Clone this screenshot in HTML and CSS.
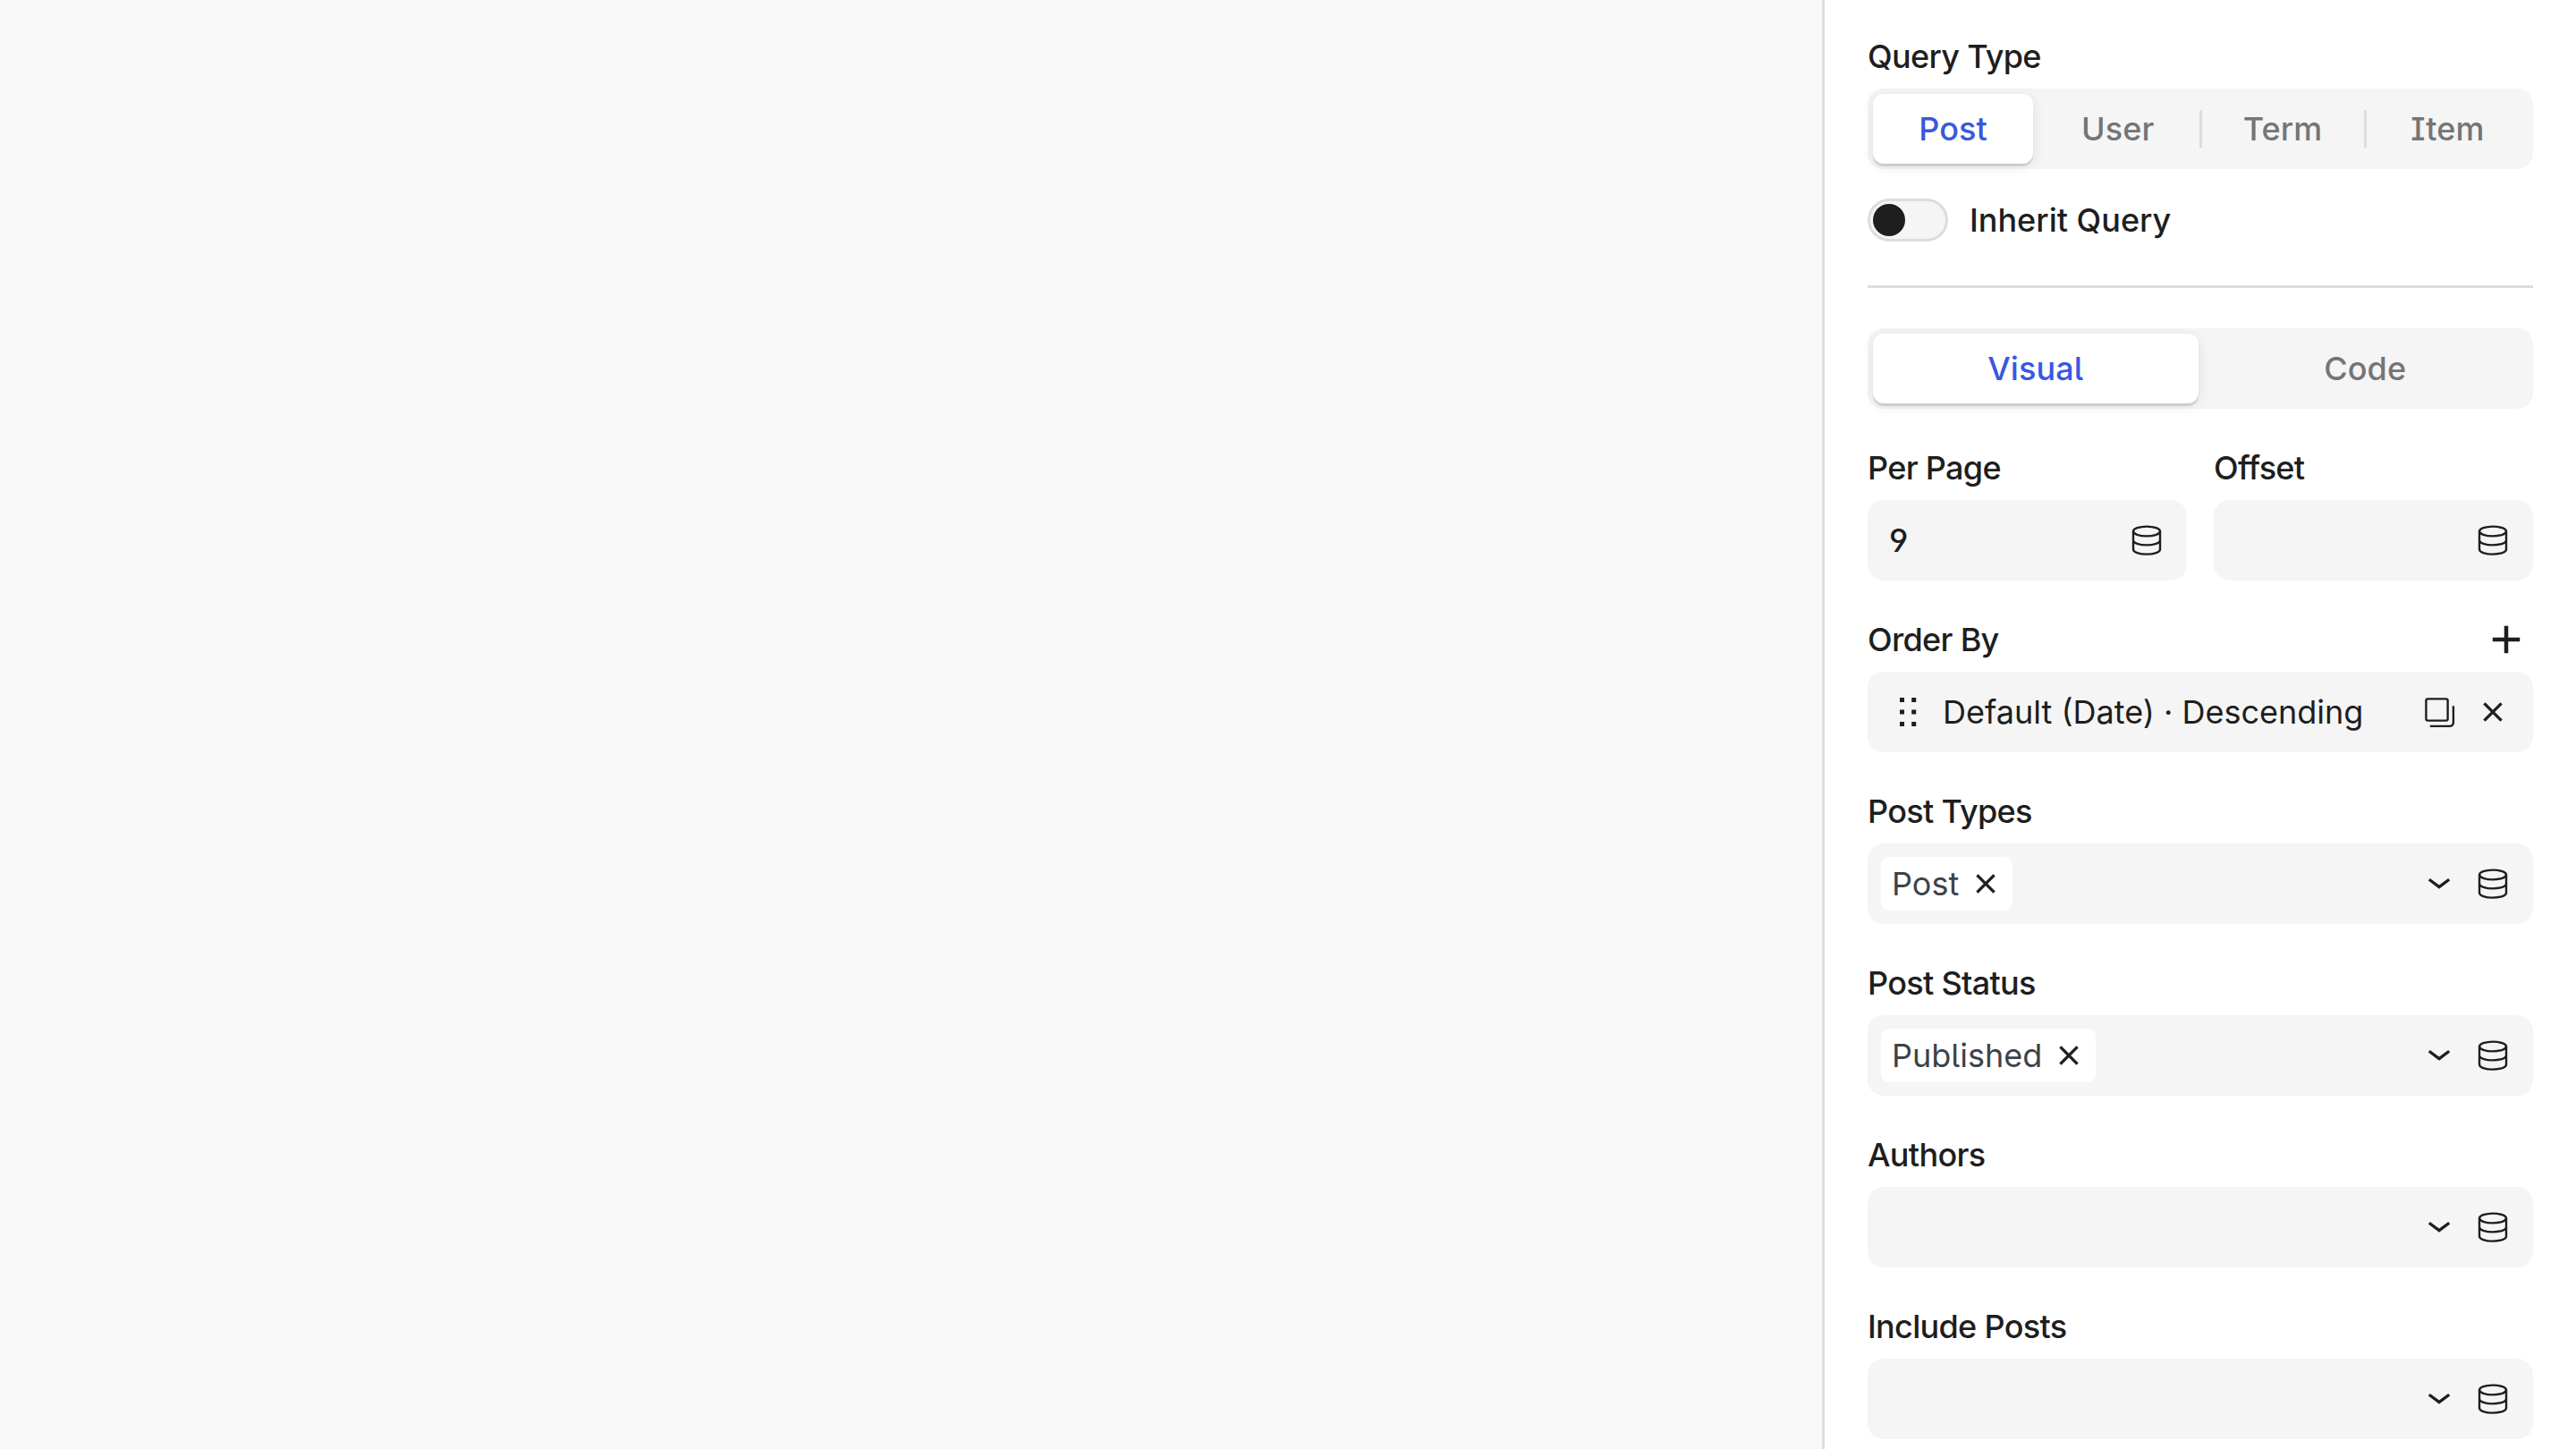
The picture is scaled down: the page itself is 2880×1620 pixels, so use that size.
FILE: index.html
```html
<!DOCTYPE html>
<html lang="en">
<head>
<meta charset="utf-8">
<title>Query Settings</title>
<link rel="stylesheet" href="styles.css">
</head>
<body>
<svg class="sprite" aria-hidden="true">
  <symbol id="database" viewBox="0 0 36 36">
    <ellipse cx="18" cy="8" rx="15" ry="5.4"/>
    <path d="M3 8V28.2C3 31.2 9.7 33.6 18 33.6S33 31.2 33 28.2V8M3 18C3 21 9.7 23.4 18 23.4S33 21 33 18"/>
  </symbol>
  <symbol id="chevron" viewBox="0 0 36 36"><path d="M6.8 13.2L18 21.6L29.2 13.2"/></symbol>
  <symbol id="close" viewBox="0 0 36 36"><path d="M8.4 8.4L27.6 27.6M27.6 8.4L8.4 27.6"/></symbol>
  <symbol id="copy" viewBox="0 0 36 36">
    <rect x="3.4" y="3.4" width="24.2" height="24.2" rx="1.8"/>
    <path d="M33.9 11.2V29.9A4 4 0 0 1 29.9 33.9H7.8"/>
  </symbol>
  <symbol id="plus" viewBox="0 0 36 36"><path d="M18 2.8V33.2M2.8 18H33.2"/></symbol>
  <symbol id="grip" viewBox="0 0 36 36"><path d="M9 2h5v5H9zM22.2 2h5v5h-5zM9 15.5h5v5H9zM22.2 15.5h5v5h-5zM9 29h5v5H9zM22.2 29h5v5h-5z"/></symbol>
</svg>

<main class="editor">
  <section class="canvas"></section>
  <aside class="sidebar">
    <div class="field">
      <div class="label">Query Type</div>
      <div class="segmented">
        <button class="segment active">Post</button>
        <button class="segment divided">User</button>
        <button class="segment divided">Term</button>
        <button class="segment">Item</button>
      </div>
    </div>

    <div class="toggle-row">
      <span class="toggle"><span class="knob"></span></span>
      <span>Inherit Query</span>
    </div>

    <hr class="divider">

    <div class="segmented">
      <button class="segment active">Visual</button>
      <button class="segment">Code</button>
    </div>

    <div class="settings">
      <div class="columns">
        <div class="field">
          <div class="label">Per Page</div>
          <div class="control"><span class="value">9</span><svg class="icon"><use href="#database"/></svg></div>
        </div>
        <div class="field">
          <div class="label">Offset</div>
          <div class="control"><span class="value"></span><svg class="icon"><use href="#database"/></svg></div>
        </div>
      </div>

      <div class="field">
        <div class="label with-action">Order By<svg class="icon add"><use href="#plus"/></svg></div>
        <div class="control sortable">
          <svg class="icon grip"><use href="#grip"/></svg>
          <span class="value">Default (Date) · Descending</span>
          <svg class="icon"><use href="#copy"/></svg>
          <svg class="icon bold"><use href="#close"/></svg>
        </div>
      </div>

      <div class="field">
        <div class="label">Post Types</div>
        <div class="control select">
          <span class="tag">Post<svg class="icon bold"><use href="#close"/></svg></span>
          <svg class="icon bold"><use href="#chevron"/></svg>
          <svg class="icon"><use href="#database"/></svg>
        </div>
      </div>

      <div class="field">
        <div class="label">Post Status</div>
        <div class="control select">
          <span class="tag">Published<svg class="icon bold"><use href="#close"/></svg></span>
          <svg class="icon bold"><use href="#chevron"/></svg>
          <svg class="icon"><use href="#database"/></svg>
        </div>
      </div>

      <div class="field">
        <div class="label">Authors</div>
        <div class="control select">
          <span class="value"></span>
          <svg class="icon bold"><use href="#chevron"/></svg>
          <svg class="icon"><use href="#database"/></svg>
        </div>
      </div>

      <div class="field">
        <div class="label">Include Posts</div>
        <div class="control select">
          <span class="value"></span>
          <svg class="icon bold"><use href="#chevron"/></svg>
          <svg class="icon"><use href="#database"/></svg>
        </div>
      </div>
    </div>
  </aside>
</main>
</body>
</html>
```
FILE: styles.css
```css
* { box-sizing: border-box; }

body {
  margin: 0;
  overflow: hidden;
  background: #fff;
  color: #1e1e1e;
  font: 400 36px/48px Inter, sans-serif;
}

.sprite { display: none; }

.editor { display: flex; height: 100vh; }

.canvas { flex: 1; background: #f8f8f8; }

.sidebar {
  width: 843px;
  padding: 39px 48px 0;
  border-left: 3px solid #ddd;
  background: #fff;
}

.field { display: flex; flex-direction: column; gap: 12px; }

.label {
  display: flex;
  align-items: center;
  justify-content: space-between;
  height: 48px;
  font-weight: 500;
  letter-spacing: -0.019em;
}

.label.with-action { padding-right: 12px; }

.segmented {
  display: flex;
  gap: 5px;
  height: 90px;
  padding: 6px;
  border-radius: 18px;
  background: #f5f5f5;
}

.segment {
  position: relative;
  flex: 1 1 0;
  padding: 0;
  border: 0;
  border-radius: 12px;
  background: none;
  color: #757575;
  font: inherit;
  font-weight: 480;
  letter-spacing: 0.1px;
  font-feature-settings: "ss02";
}

.segment.active {
  background: #fff;
  color: #3858e1;
  box-shadow: 0 3px 1px rgba(0, 0, 0, .12), 0 3px 15px rgba(0, 0, 0, .09);
}

.segment.divided::after {
  content: "";
  position: absolute;
  top: 18px;
  right: -4px;
  width: 3px;
  height: 42px;
  background: #ddd;
}

.toggle-row {
  display: flex;
  align-items: center;
  gap: 24px;
  height: 48px;
  margin-top: 33px;
  font-weight: 490;
}

.toggle {
  width: 90px;
  height: 48px;
  padding: 3px;
  border: 3px solid #ddd;
  border-radius: 24px;
  background: #f5f5f5;
}

.knob {
  display: block;
  width: 36px;
  height: 36px;
  border-radius: 50%;
  background: #1e1e1e;
}

.divider {
  height: 3px;
  margin: 49px 0 45px;
  border: 0;
  background: #ddd;
}

.settings {
  display: flex;
  flex-direction: column;
  gap: 42px;
  margin-top: 42px;
}

.columns {
  display: grid;
  grid-template-columns: 1fr 1fr;
  gap: 30px;
}

.control {
  display: flex;
  align-items: center;
  gap: 24px;
  height: 90px;
  padding: 0 27px 0 24px;
  border-radius: 18px;
  background: #f5f5f5;
}

.control.select { padding-left: 15px; }

.value { flex: 1; }

.columns .value { font-weight: 480; font-feature-settings: "cv04"; }

.icon {
  flex: none;
  width: 36px;
  height: 36px;
  fill: none;
  stroke: currentColor;
  stroke-width: 2.4;
}

.icon.bold { stroke-width: 3.3; }
.icon.add { stroke-width: 4.5; }
.icon.grip { margin: 0 -3px 0 3px; fill: currentColor; stroke: none; }

.tag {
  display: flex;
  align-items: center;
  gap: 12px;
  height: 60px;
  margin-right: auto;
  padding: 0 12px;
  border-radius: 9px;
  background: #fff;
  color: #3c434a;
  font-feature-settings: "ss02";
}

.tag .icon { color: #1e1e1e; }
```
